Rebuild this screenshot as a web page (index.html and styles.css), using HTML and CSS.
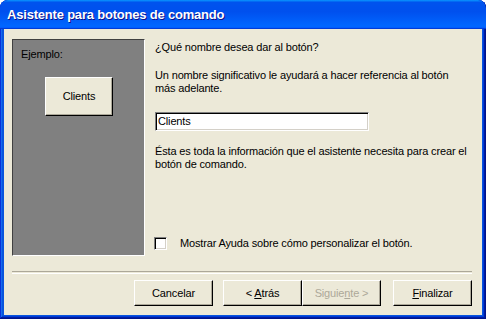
FILE: index.html
```html
<!DOCTYPE html>
<html lang="es">
<head>
<meta charset="utf-8">
<title>Asistente para botones de comando</title>
<link rel="stylesheet" href="styles.css">
</head>
<body>
<div class="window">
  <div class="titlebar"><span class="title">Asistente para botones de comando</span></div>
  <div class="client">
    <div class="main">
      <div class="preview">
        <div class="preview-label">Ejemplo:</div>
        <div class="btn sample"><span>Clients</span></div>
      </div>
      <div class="form">
        <p class="line q">¿Qué nombre desea dar al botón?</p>
        <p class="line hint">Un nombre significativo le ayudará a hacer referencia al botón<br>más adelante.</p>
        <div class="textbox">Clients</div>
        <p class="line info">Ésta es toda la información que el asistente necesita para crear el<br>botón de comando.</p>
        <label class="check"><span class="box"></span><span class="check-text">Mostrar Ayuda sobre cómo personalizar el botón.</span></label>
      </div>
    </div>
    <div class="sep"></div>
    <div class="buttons">
      <div class="btn cmd"><span>Cancelar</span></div>
      <div class="pair">
        <div class="btn cmd"><span>&lt; <u>A</u>trás</span></div>
        <div class="btn cmd disabled"><span>Siguie<u>n</u>te &gt;</span></div>
      </div>
      <div class="btn cmd"><span><u>F</u>inalizar</span></div>
    </div>
  </div>
</div>
</body>
</html>
```

FILE: styles.css
```css
html, body {
  margin: 0;
  padding: 0;
  background: #ffffff;
}

.window {
  width: 486px;
  height: 319px;
  box-sizing: border-box;
  display: flex;
  flex-direction: column;
  background: #0855dd;
  border-radius: 8px 8px 0 0;
  box-shadow: inset -1px -1px #00138c, inset 1px 1px #0831d9, inset -2px -2px #001ea0, inset 2px 2px #166aee, inset -3px -3px #003bda, inset 3px 3px #0855dd;
  font-family: "Liberation Sans", Arial, sans-serif;
  font-size: 11px;
  letter-spacing: -0.15px;
  color: #000;
  overflow: hidden;
}

.titlebar {
  height: 29px;
  flex: none;
  box-sizing: border-box;
  padding: 7px 0 0 7px;
  border-radius: 8px 8px 0 0;
  background: linear-gradient(180deg, #0997ff, #0053ee 8%, #0050ee 40%, #0066ff 88%, #0066ff 93%, #005bff 95%, #003dd7 96%, #003dd7);
}

.title {
  font-family: "Liberation Sans", Arial, sans-serif;
  font-weight: bold;
  font-size: 13px;
  line-height: 16px;
  color: #fff;
  text-shadow: 1px 1px #0f1089;
  letter-spacing: -0.2px;
}

.client {
  flex: 1;
  margin: 0 4px 4px 4px;
  background: #ece9d8;
  display: flex;
  flex-direction: column;
}

.main {
  display: flex;
  padding: 10px 0 0 8px;
  height: 217px;
}

.preview {
  width: 133px;
  height: 217px;
  box-sizing: border-box;
  background: #808080;
  border-top: 1px solid #404040;
  border-left: 1px solid #404040;
  border-right: 1px solid #ffffff;
  border-bottom: 1px solid #ffffff;
  padding: 8px 0 0 8px;
}

.preview-label {
  line-height: 13px;
}

.btn {
  box-sizing: border-box;
  background: #ece9d8;
  border-style: solid;
  border-width: 1px;
  border-color: #ffffff #000000 #000000 #ffffff;
  box-shadow: inset -1px -1px #aca899;
  display: flex;
  align-items: center;
  justify-content: center;
  line-height: 13px;
  white-space: nowrap;
}

.sample {
  width: 68px;
  height: 39px;
  margin: 16px 0 0 24px;
}

.form {
  margin-left: 10px;
  padding-top: 2px;
  display: flex;
  flex-direction: column;
  align-items: flex-start;
}

.line {
  margin: 0;
  line-height: 13px;
  white-space: nowrap;
}

.hint {
  margin-top: 15px;
}

.textbox {
  margin-top: 17px;
  width: 214px;
  height: 19px;
  box-sizing: border-box;
  background: #ffffff;
  border-style: solid;
  border-width: 1px;
  border-color: #808080 #ffffff #ffffff #808080;
  box-shadow: inset 1px 1px #000000, inset -1px -1px #d4d0c8;
  padding: 1px 0 0 2px;
  line-height: 15px;
}

.info {
  margin-top: 14px;
}

.check {
  margin-top: 66px;
  margin-left: -1px;
  display: flex;
  align-items: center;
  line-height: 13px;
}

.box {
  width: 13px;
  height: 13px;
  box-sizing: border-box;
  background: #ffffff;
  border-style: solid;
  border-width: 1px;
  border-color: #808080 #ffffff #ffffff #808080;
  box-shadow: inset 1px 1px #000000, inset -1px -1px #d4d0c8;
}

.check-text {
  margin-left: 13px;
}

.sep {
  margin: 15px 10px 0 8px;
  height: 1px;
  border-top: 1px solid #aca899;
  border-bottom: 1px solid #ffffff;
}

.buttons {
  margin-top: 6px;
  display: flex;
  justify-content: flex-end;
  padding-right: 10px;
}

.pair {
  display: flex;
  margin: 0 12px 0 10px;
}

.cmd {
  width: 79px;
  height: 26px;
}

.disabled {
  color: #aca899;
}

u {
  text-decoration: underline;
  text-underline-offset: 1px;
}
```
